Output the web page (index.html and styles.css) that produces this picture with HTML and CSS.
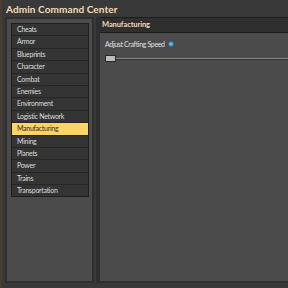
FILE: index.html
```html
<!DOCTYPE html>
<html lang="en">
<head>
    <meta charset="UTF-8">
    <meta name="viewport" content="width=device-width, initial-scale=1.0">
    <link rel="stylesheet" href="styles.css">
</head>
<body>
    <div id="window">
        <div class="title-bar">
            <h1>Admin Command Center</h1>
        </div>
        <div class="frame-body">
            <div class="side-panel">
                <ul class="category-list">
                    <li>Cheats</li>
                    <li>Armor</li>
                    <li>Blueprints</li>
                    <li>Character</li>
                    <li>Combat</li>
                    <li>Enemies</li>
                    <li>Environment</li>
                    <li>Logistic Network</li>
                    <li class="selected">Manufacturing</li>
                    <li>Mining</li>
                    <li>Planets</li>
                    <li>Power</li>
                    <li>Trains</li>
                    <li>Transportation</li>
                </ul>
            </div>
            <div class="main-panel">
                <div class="panel-header">Manufacturing</div>
                <div class="panel-content">
                    <div class="setting-label">
                        Adjust Crafting Speed
                        <span class="info-dot"></span>
                    </div>
                    <div class="slider">
                        <div class="slider-thumb"></div>
                        <div class="slider-track"></div>
                    </div>
                </div>
            </div>
        </div>
    </div>
</body>
</html>
```

FILE: styles.css
```css
body {
    margin: 0;
    font-family: "Lato", "Liberation Sans", sans-serif;
    background-color: #393939;
}
#window {
    width: 288px;
    height: 288px;
    box-sizing: border-box;
    background-color: #3a3939;
    border-left: 2px solid #4a3c34;
    display: flex;
    flex-direction: column;
}
.title-bar {
    height: 17px;
    display: flex;
    align-items: center;
    padding-left: 4px;
}
h1 {
    margin: 0;
    font-size: 10px;
    font-weight: bold;
    color: #f3dcb4;
    letter-spacing: 0.1px;
}
.frame-body {
    flex: 1;
    display: flex;
    gap: 2px;
    padding: 0 0 5px 3px;
}
.side-panel {
    width: 89px;
    box-sizing: border-box;
    background-color: #4b4b4b;
    border: 2px solid #2f2f2f;
    padding: 4px 3px 4px 4px;
}
.category-list {
    list-style: none;
    margin: 0;
    padding: 0;
    border: 1px solid #1f1f1f;
    background-color: #1f1f1f;
}
.category-list li {
    height: 11.4px;
    line-height: 11.4px;
    padding-left: 5px;
    font-size: 7px;
    letter-spacing: -0.3px;
    color: #dcdcdc;
    background-color: #343434;
    border-bottom: 1px solid #262626;
}
.category-list li:last-child {
    border-bottom: none;
}
.category-list li.selected {
    background-color: #fdd562;
    color: #2a2a2a;
}
.main-panel {
    flex: 1;
    display: flex;
    flex-direction: column;
    border-left: 4px solid #2f2f2f;
    border-bottom: 2px solid #2f2f2f;
    background-color: #4b4b4b;
}
.panel-header {
    height: 14px;
    line-height: 14px;
    padding-left: 2px;
    font-size: 7.5px;
    font-weight: bold;
    letter-spacing: -0.1px;
    color: #f3dcb4;
    background-color: #2f2f2f;
    border-top: 1px solid #1c1c1c;
    border-bottom: 1px solid #1c1c1c;
}
.panel-content {
    flex: 1;
    padding: 7px 0 0 5px;
}
.setting-label {
    font-size: 7px;
    letter-spacing: -0.35px;
    color: #e2e2e2;
    display: flex;
    align-items: center;
    gap: 3px;
}
.info-dot {
    width: 4px;
    height: 4px;
    border-radius: 50%;
    background-color: #5fb6e6;
    border: 0.5px solid #2a6b8c;
}
.slider {
    margin-top: 7px;
    display: flex;
    align-items: center;
}
.slider-thumb {
    width: 9px;
    height: 5px;
    background-color: #bdbdbd;
    border: 1px solid #2a2a2a;
}
.slider-track {
    flex: 1;
    height: 1px;
    background-color: #8a8a8a;
    border-bottom: 1px solid #333;
}
```
